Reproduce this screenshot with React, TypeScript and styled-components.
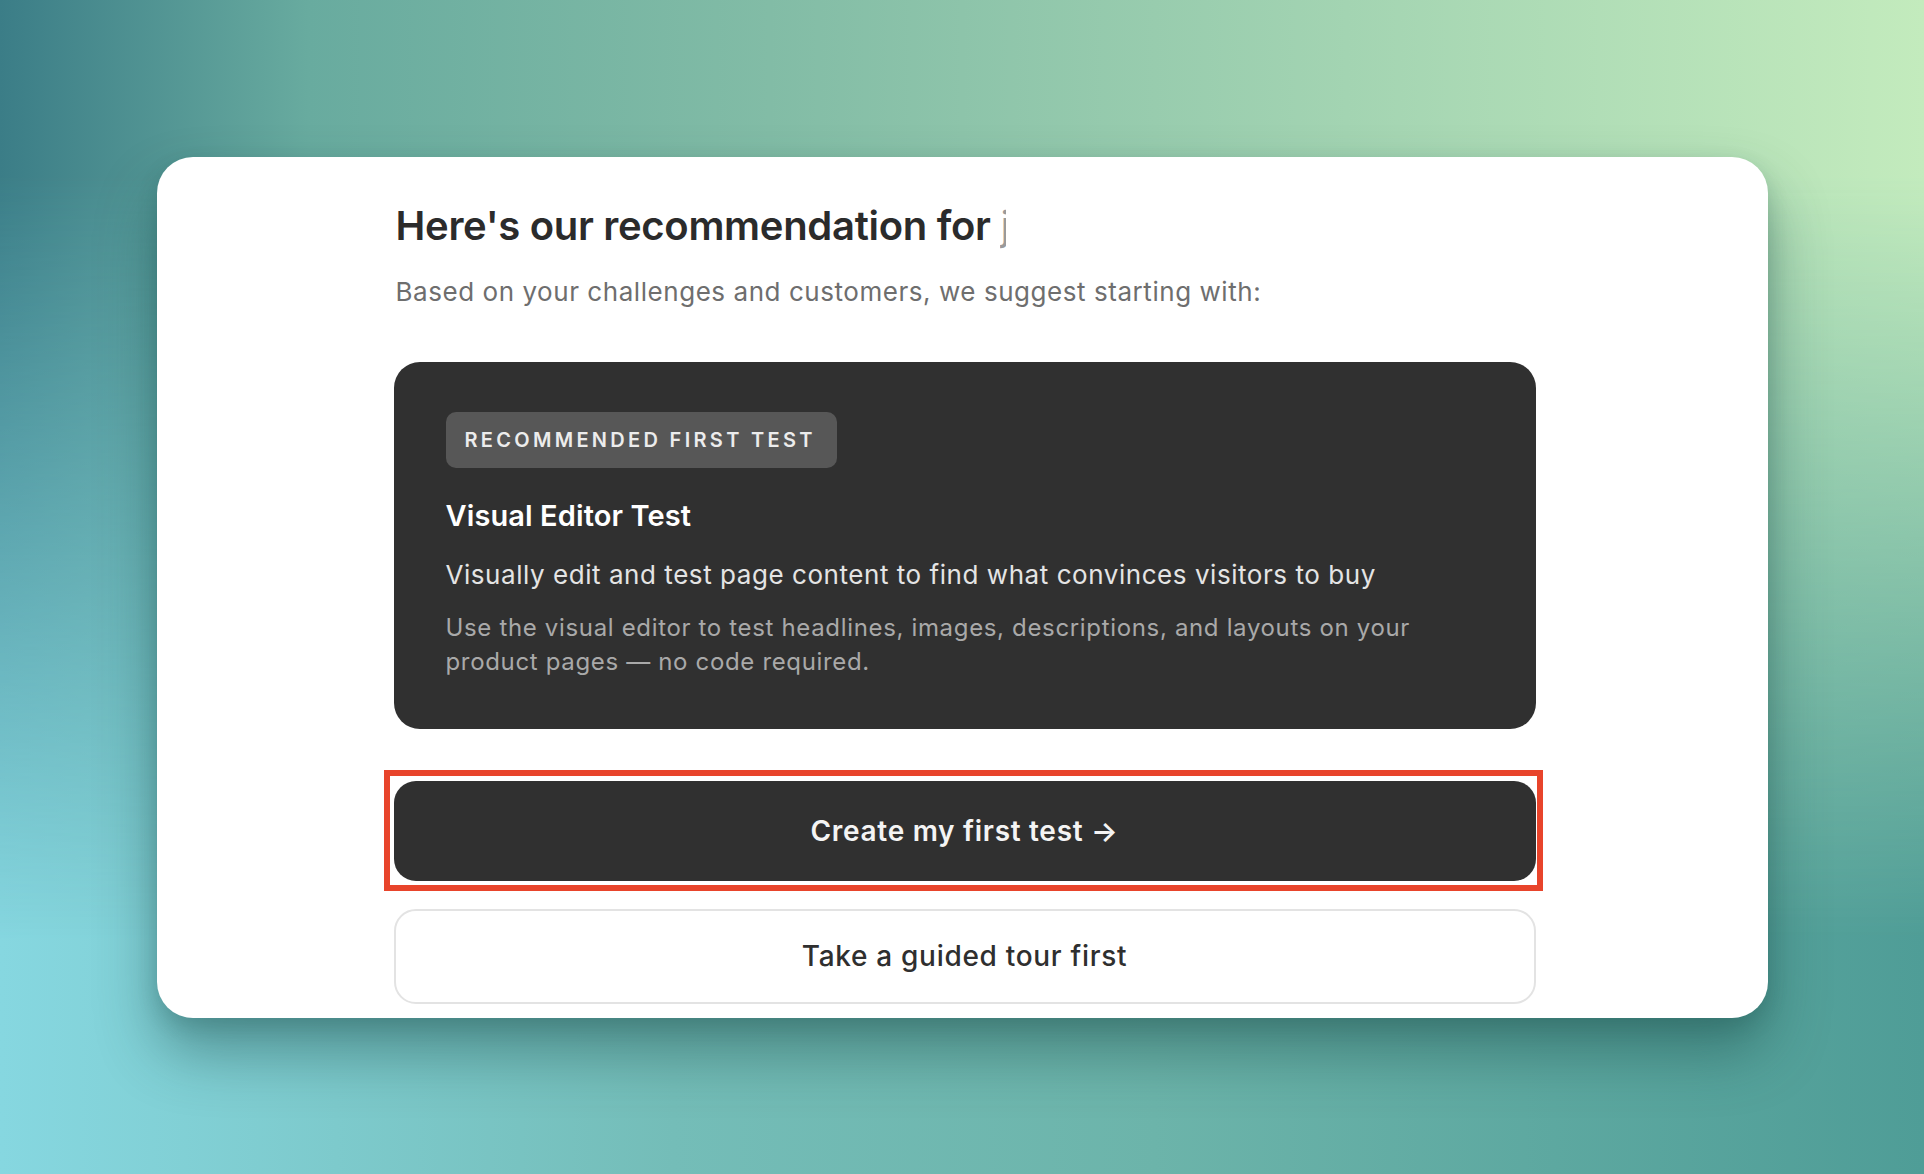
import React from 'react';
import styled, { createGlobalStyle } from 'styled-components';

const GlobalStyle = createGlobalStyle`
  html, body {
    margin: 0;
    padding: 0;
    height: 100%;
  }
  body {
    font-family: Inter, "Noto Sans", "Liberation Sans", sans-serif;
    -webkit-font-smoothing: antialiased;
  }
  #root {
    height: 100%;
  }
`;

const Backdrop = styled.div`
  position: relative;
  min-height: 100vh;
  display: flex;
  align-items: center;
  justify-content: center;
  overflow: hidden;
  background: linear-gradient(to right, #86d7e0 0%, #74bdb8 35%, #6cb4aa 60%, #4f9d97 100%);

  &::before {
    content: '';
    position: absolute;
    inset: 0;
    background: linear-gradient(to right, #3b7d87 0%, #68ab9f 16%, #82bca6 40%, #a3d4b2 70%, #c3ebbd 100%);
    -webkit-mask-image: linear-gradient(to bottom, #000 0%, #000 15%, transparent 80%);
    mask-image: linear-gradient(to bottom, #000 0%, #000 15%, transparent 80%);
  }
`;

const Sheet = styled.section`
  position: relative;
  z-index: 1;
  width: 1611px;
  height: 861px;
  box-sizing: border-box;
  padding: 45px 0 0 5px;
  background: #ffffff;
  border-radius: 36px;
  overflow: hidden;
  box-shadow: 0 34px 60px rgba(22, 70, 68, 0.45), 0 8px 20px rgba(22, 70, 68, 0.18);
`;

const Column = styled.div`
  width: 1142px;
  margin: 0 auto;
  display: flex;
  flex-direction: column;
`;

const Heading = styled.h1`
  margin: 0 0 0 2px;
  font-size: 40px;
  line-height: 48px;
  font-weight: 600;
  letter-spacing: -0.3px;
  color: #2b2b2b;
  white-space: nowrap;
`;

// the name being typed in, shown cut off as in the capture
const Typing = styled.span`
  display: inline-block;
  width: 6px;
  overflow: hidden;
  vertical-align: top;
  color: #9a9a9a;
  font-weight: 400;
`;

const Lead = styled.p`
  margin: 25px 0 0 2px;
  font-size: 26px;
  line-height: 34px;
  letter-spacing: 0.55px;
  color: #6e6e6e;
`;

const Recommendation = styled.div`
  margin-top: 53px;
  padding: 50px 52px;
  background: #303030;
  border-radius: 26px;
  display: flex;
  flex-direction: column;
  align-items: flex-start;
`;

const Badge = styled.span`
  padding: 14px 21px 14px 19px;
  font-size: 20px;
  line-height: 28px;
  font-weight: 600;
  letter-spacing: 3.3px;
  text-transform: uppercase;
  color: #ececec;
  background: #575757;
  border-radius: 10px;
`;

const TestName = styled.h2`
  margin: 30px 0 0;
  font-size: 29px;
  line-height: 36px;
  font-weight: 600;
  letter-spacing: 0.1px;
  color: #ffffff;
`;

const Summary = styled.p`
  margin: 24px 0 0;
  font-size: 26px;
  line-height: 34px;
  letter-spacing: 0.55px;
  color: #e4e4e4;
`;

const Detail = styled.p`
  margin: 19px 0 0;
  font-size: 24px;
  line-height: 34px;
  letter-spacing: 0.66px;
  color: #a9a9a9;
  max-width: 990px;
`;

const Highlight = styled.div`
  margin: 41px -7px 0 -10px;
  padding: 5px 1px 4px 4px;
  border: 6px solid #e8442b;
`;

const Action = styled.button<{ $primary?: boolean }>`
  width: 100%;
  box-sizing: border-box;
  display: flex;
  align-items: center;
  justify-content: center;
  font-family: inherit;
  font-size: 28px;
  letter-spacing: 0.7px;
  font-weight: ${(p) => (p.$primary ? 600 : 500)};
  border-radius: 22px;
  cursor: pointer;
  margin-top: ${(p) => (p.$primary ? '0' : '18px')};
  height: ${(p) => (p.$primary ? '100px' : '95px')};
  color: ${(p) => (p.$primary ? '#f4f4f4' : '#2f2f2f')};
  background: ${(p) => (p.$primary ? '#303030' : '#ffffff')};
  border: ${(p) => (p.$primary ? 'none' : '2px solid #e3e3e3')};
`;

const App: React.FC = () => {
  return (
    <>
      <GlobalStyle />
      <Backdrop>
        <Sheet>
          <Column>
            <Heading>
              Here's our recommendation for <Typing>j</Typing>
            </Heading>
            <Lead>Based on your challenges and customers, we suggest starting with:</Lead>
            <Recommendation>
              <Badge>Recommended first test</Badge>
              <TestName>Visual Editor Test</TestName>
              <Summary>Visually edit and test page content to find what convinces visitors to buy</Summary>
              <Detail>
                Use the visual editor to test headlines, images, descriptions, and layouts on your
                product pages — no code required.
              </Detail>
            </Recommendation>
            <Highlight>
              <Action $primary>Create my first test →</Action>
            </Highlight>
            <Action>Take a guided tour first</Action>
          </Column>
        </Sheet>
      </Backdrop>
    </>
  );
};

export default App;
